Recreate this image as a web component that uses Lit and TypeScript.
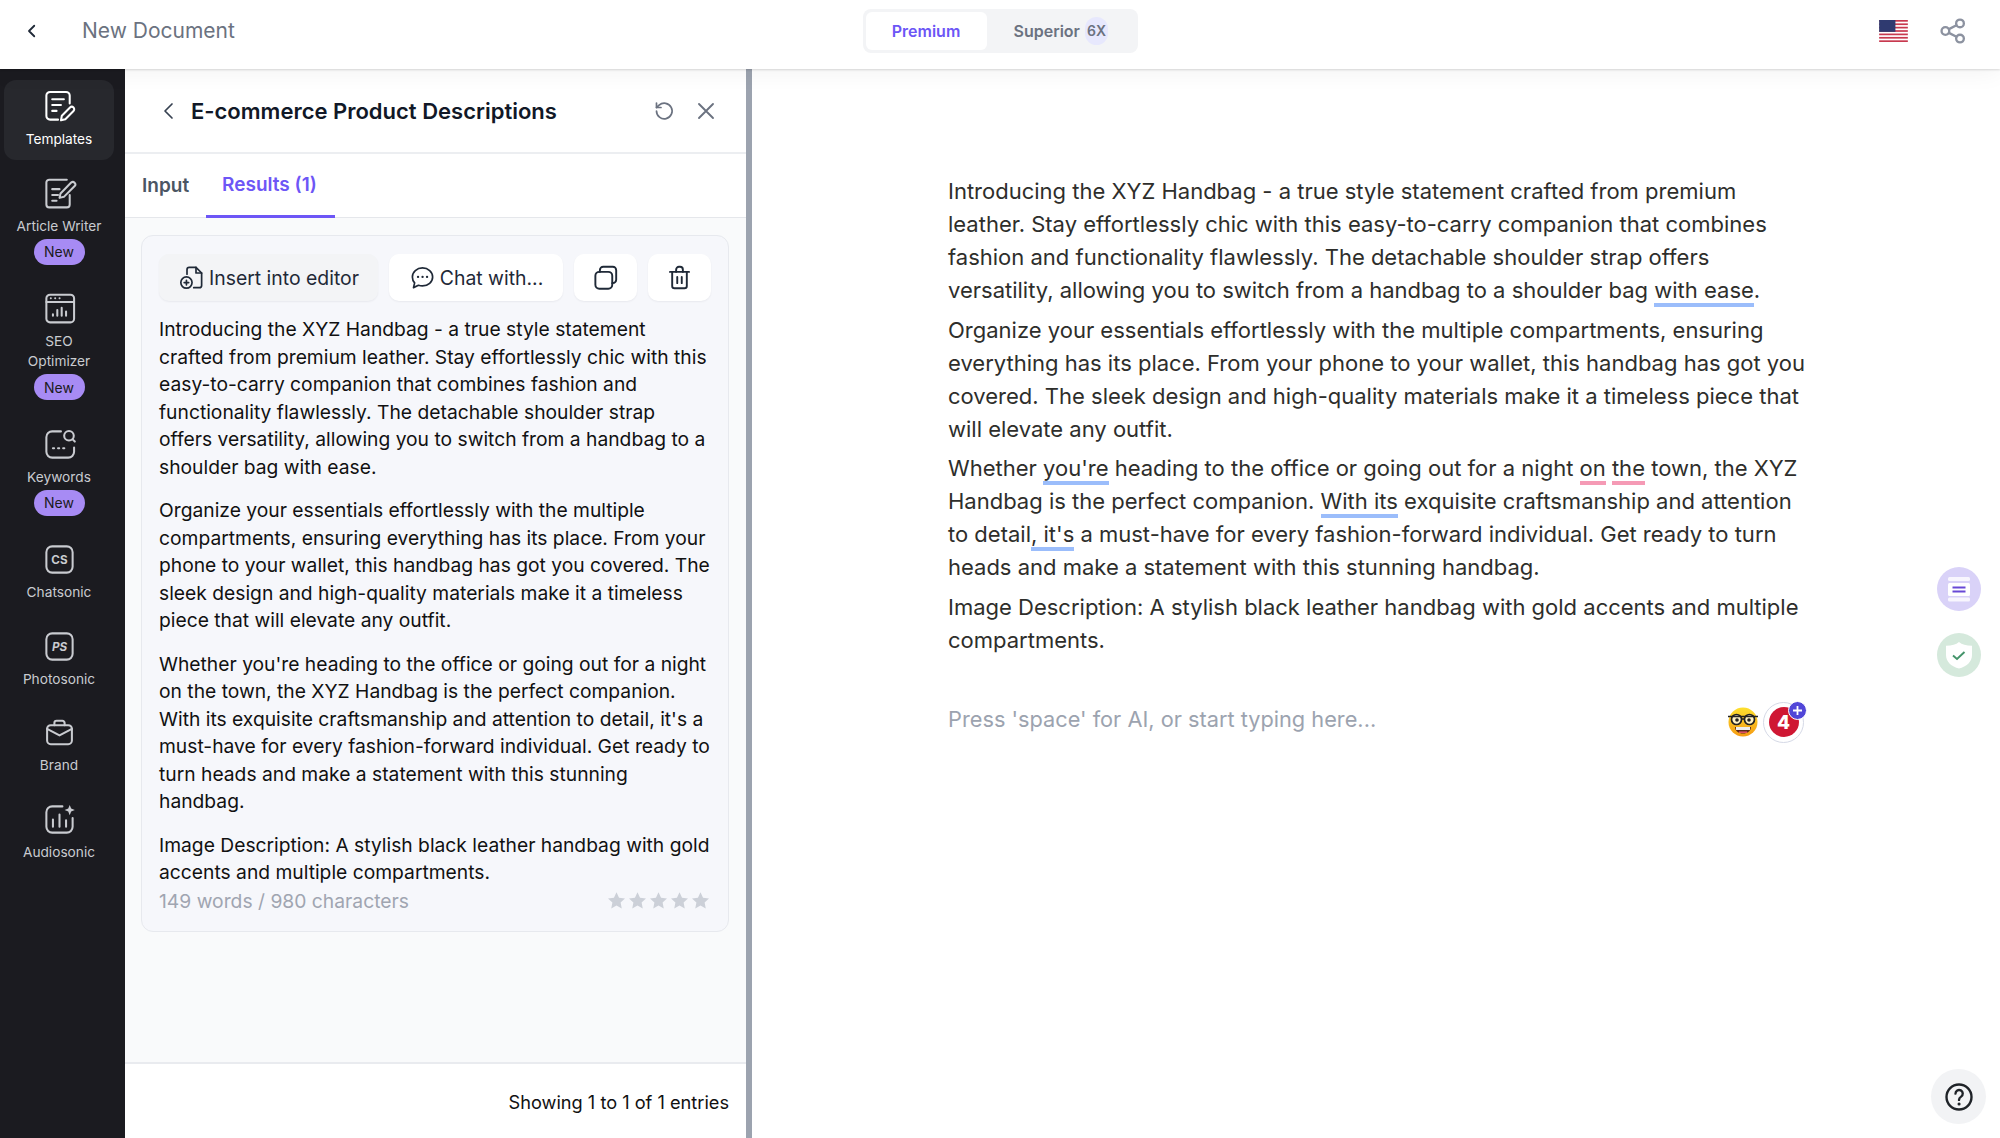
import { LitElement, html, css, svg } from "lit";
import { customElement } from "lit/decorators.js";

const stroke = (w: number, inner: unknown, box = 24) => html`<svg width="100%" height="100%" viewBox="0 0 ${box} ${box}" fill="none" stroke="currentColor" stroke-width="${w}" stroke-linecap="round" stroke-linejoin="round">${inner}</svg>`;

const navIcons: Record<string, unknown> = {
  templates: svg`<path d="M11 21H5.5A2.5 2.5 0 0 1 3 18.5v-14A2.5 2.5 0 0 1 5.5 2h11A2.5 2.5 0 0 1 19 4.5V10"/><path d="M7 7h8M7 11h6M7 15h3"/><path d="M13 21.5l.6-3.2 5.6-5.6a1.6 1.6 0 0 1 2.4 2.4L16 20.7z"/>`,
  article: svg`<path d="M19 13v6.5a2 2 0 0 1-2 2H5a2 2 0 0 1-2-2v-15a2 2 0 0 1 2-2h12"/><path d="M7 9h5M7 13h4M7 17h3"/><path d="M12 15l.7-3L20 4.500a1.700 1.700 0 0 1 2.400 2.400L15 14.300z"/>`,
  seo: svg`<rect x="3" y="2.500" width="19" height="19" rx="2.500"/><path d="M3 7.500h19"/><path d="M6 5h.1M9 5h.1M12 5h.1" stroke-width="1.300"/><path d="M7.500 17v-1M10.500 17v-4M13.500 17v-5.500M16.500 17v-3" />`,
  keywords: svg`<path d="M13 3H7a4 4 0 0 0-4 4v10a4 4 0 0 0 4 4h11a4 4 0 0 0 4-4v-3"/><circle cx="18.500" cy="6" r="3.300"/><path d="M21 8.500l1.500 1.500"/><path d="M7.500 14.500h.8M11 14.500h.8M14.500 14.500h.8"/>`,
  chatsonic: svg`<rect x="3" y="3" width="18" height="18" rx="4"/><text x="12" y="15.200" text-anchor="middle" font-family="Inter" font-weight="700" font-size="8" fill="currentColor" stroke="none">CS</text>`,
  photosonic: svg`<rect x="3" y="3" width="18" height="18" rx="4"/><text x="12" y="15.200" text-anchor="middle" font-family="Inter" font-style="italic" font-weight="700" font-size="8" fill="currentColor" stroke="none">PS</text>`,
  brand: svg`<rect x="3.500" y="7" width="17" height="13" rx="2.500"/><path d="M8.500 7V5.500A1.500 1.500 0 0 1 10 4h4a1.500 1.500 0 0 1 1.500 1.500V7"/><path d="M3.500 9.500L12 14l8.500-4.500"/>`,
  audio: svg`<path d="M14 3H7a4 4 0 0 0-4 4v10a4 4 0 0 0 4 4h10a4 4 0 0 0 4-4v-6"/><path d="M7.500 12v5M12 8.500V17M16.500 12.500V17"/><path d="M19 2l1 2.500L22.500 5.500 20 6.500 19 9l-1-2.500-2.500-1 2.500-1z" fill="currentColor" stroke="none"/>`,
};

const nav = [
  { key: "templates", label: "Templates", active: true },
  { key: "article", label: "Article Writer", badge: true },
  { key: "seo", label: "SEO<br>Optimizer", lines: ["SEO", "Optimizer"], badge: true },
  { key: "keywords", label: "Keywords", badge: true },
  { key: "chatsonic", label: "Chatsonic" },
  { key: "photosonic", label: "Photosonic" },
  { key: "brand", label: "Brand" },
  { key: "audio", label: "Audiosonic" },
];

const stripes = [0, 2, 4, 6, 8, 10, 12];

@customElement("app-root")
export class AppRoot extends LitElement {
  static styles = css`
    :host { display: block; width: 100%; height: 1138px; font-family: Inter, "Liberation Sans", sans-serif; overflow: hidden; background: #fff; }
    .page { display: grid; grid-template-rows: 69px 1fr; height: 1138px; }
    .top { display: grid; grid-template-columns: 1fr auto 1fr; align-items: center; padding-bottom: 8px; box-sizing: border-box; background: #fff; box-shadow: 0 1px 2px rgba(0,0,0,.14), 0 4px 22px rgba(0,0,0,.05); position: relative; z-index: 2; }
    .top-left { display: flex; align-items: center; padding-left: 23px; }
    .top-back { width: 18px; height: 18px; color: #1f2937; margin-right: 41px; }
    .doc { font-size: 21px; color: #6b7280; }
    .toggle { display: flex; align-items: center; height: 44px; width: 275px; box-sizing: border-box; background: #f3f4f6; border-radius: 8px; padding: 3px; font-size: 16px; font-weight: 600; }
    .toggle-on { width: 121px; height: 38px; background: #fff; border-radius: 6px; color: #6c56f6; display: flex; align-items: center; justify-content: center; }
    .toggle-off { display: flex; align-items: center; color: #6b7280; margin-left: 27px; gap: 5px; }
    .x6 { width: 23px; height: 28px; border-radius: 12px; background: #e7e8fd; font-size: 14px; display: flex; align-items: center; justify-content: center; }
    .top-right { display: flex; justify-content: flex-end; align-items: center; gap: 31px; padding-right: 33px; }
    .flag { width: 29px; height: 22px; display: block; }
    .share { width: 28px; height: 28px; color: #8c92a0; }

    .body { display: flex; min-height: 0; }
    .side { width: 125px; flex: none; background: #1b1b20; padding: 11px 0 0 4px; box-sizing: border-box; display: flex; flex-direction: column; gap: 6.500px; }
    .item { width: 110px; min-height: 80px; box-sizing: border-box; border-radius: 12px; padding: 9px 0 10px; display: flex; flex-direction: column; align-items: center; color: #c9cbd0; font-size: 13.700px; }
    .item.on { background: #27282d; color: #fff; }
    .nav-ic { width: 35px; height: 35px; margin-bottom: 5px; }
    .lbl { line-height: 20px; text-align: center; white-space: nowrap; }
    .new { margin-top: 3px; margin-bottom: 1px; width: 51px; height: 26px; border-radius: 13px; background: #a78bf4; color: #1b1b20; font-size: 14px; display: flex; align-items: center; justify-content: center; }

    .panel { width: 621px; flex: none; display: flex; flex-direction: column; background: #fff; }
    .ph { height: 85px; flex: none; display: flex; align-items: center; padding: 0 28px 0 36px; box-sizing: border-box; border-bottom: 2px solid #eceef1; }
    .ph-back { width: 24px; height: 24px; color: #374151; margin-right: 10px; margin-left: -4px; }
    .ph h1 { flex: 1; margin: 0; font-size: 22px; font-weight: 600; color: #111827; }
    .ph-ic { width: 24px; height: 24px; color: #6b7280; margin-left: 18px; }
    .tabs { height: 64px; flex: none; display: flex; box-sizing: border-box; border-bottom: 1px solid #e5e7eb; padding-left: 17px; font-size: 19px; font-weight: 600; color: #4b5563; }
    .tab { display: flex; align-items: center; }
    .tab.a { margin-left: 17px; padding: 0 18px 0 16px; color: #6d56f6; border-bottom: 3px solid #6d56f6; height: 64px; box-sizing: border-box; }
    .scroll { flex: 1; background: #f9fafb; padding: 17px 17px 0 16px; min-height: 0; }
    .card { background: #f6f7fb; border: 1.500px solid #e7e9ee; border-radius: 12px; padding: 18px 17px 0; height: 697px; box-sizing: border-box; }
    .btns { display: flex; gap: 11px; height: 47px; margin-bottom: 15px; }
    .btn { display: flex; align-items: center; justify-content: center; gap: 4px; background: #fff; border-radius: 10px; font-size: 19.400px; color: #1f2937; box-shadow: 0 1px 2px rgba(17,24,39,.06); white-space: nowrap; }
    .btn.grey { background: #f3f4f6; width: 219px; }
    .btn.chat { width: 174px; }
    .btn.sq { width: 63px; }
    .bi { width: 27px; height: 27px; color: #1f2937; flex: none; }
    .res { font-size: 19.250px; line-height: 27.500px; color: #111; }
    .res p { margin: 0 0 16px; white-space: nowrap; }
    .res p.last { margin: 0; }
    .meta { display: flex; justify-content: space-between; align-items: center; height: 28px; color: #a0a5b1; font-size: 19.300px; }
    .stars { display: flex; gap: 0; color: #ccd0d8; }
    .star { width: 21px; height: 21px; }
    .pf { height: 76px; flex: none; border-top: 2px solid #e9ebef; display: flex; align-items: center; justify-content: flex-end; padding: 2px 17px 0 0; box-sizing: border-box; font-size: 18.200px; color: #111; }
    .bar { width: 6px; flex: none; background: #9ca3af; }

    .main { flex: 1; position: relative; padding: 106px 0 0 196px; box-sizing: border-box; background: #fff; }
    .doc-text { font-size: 22px; line-height: 33px; color: #2e2e2b; }
    .doc-text p { margin: 0 0 6.600px; white-space: nowrap; }
    .b { border-bottom: 4px solid #9bbdfb; }
    .r { border-bottom: 4px solid #f59ab5; }
    .ph-row { margin-top: 40px; width: 856px; display: flex; align-items: center; justify-content: space-between; height: 44px; }
    .hint { font-size: 21.750px; color: #9ca3af; }
    .marks { display: flex; align-items: center; gap: 5px; margin-top: 7px; }
    .emoji { width: 30px; height: 30px; display: block; }
    .score { width: 41px; height: 41px; border-radius: 50%; border: 1.500px solid #d5d9e6; box-sizing: border-box; position: relative; display: flex; align-items: center; justify-content: center; }
    .score-in { width: 30px; height: 30px; border-radius: 50%; background: #cf1733; color: #fff; font-weight: 800; font-size: 19px; display: flex; align-items: center; justify-content: center; }
    .plus { position: absolute; right: -4px; top: -2px; width: 17px; height: 17px; border-radius: 50%; background: #5146d8; color: #fff; display: flex; align-items: center; justify-content: center; border: 1.500px solid #fff; box-sizing: content-box; }
    .fab { position: absolute; width: 44px; height: 44px; border-radius: 50%; left: 1185px; display: flex; align-items: center; justify-content: center; }
    .fab.f1 { top: 498px; background: #d9d2f8; }
    .fab.f2 { top: 564px; background: #d5e9dc; }
    .fab svg { width: 30px; height: 30px; display: block; }
    .help { position: absolute; left: 1179px; top: 1000px; width: 55px; height: 55px; border-radius: 50%; background: #f2f3f5; display: flex; align-items: center; justify-content: center; color: #1f2328; }
    .help svg { width: 30px; height: 30px; }
  `;

  render() {
    const star = svg`<path d="M12 2.500l2.900 6.300 6.800.8-5 4.700 1.300 6.800-6-3.400-6 3.400 1.300-6.800-5-4.700 6.800-.8z" fill="currentColor"/>`;
    return html`<div class="page">
      <header class="top">
        <div class="top-left">
          <span class="top-back">${stroke(2.4, svg`<path d="M15 5l-7 7 7 7"/>`)}</span>
          <span class="doc">New Document</span>
        </div>
        <div class="toggle">
          <div class="toggle-on">Premium</div>
          <div class="toggle-off">Superior <span class="x6">6X</span></div>
        </div>
        <div class="top-right">
          <svg class="flag" viewBox="0 0 30 23">
            <rect width="30" height="23" fill="#fff"/>
            ${stripes.map((i) => svg`<rect y="${i * 1.77}" width="30" height="1.770" fill="#c8394f"/>`)}
            <rect width="17" height="12.400" fill="#2f3a70"/>
          </svg>
          <span class="share">${stroke(2, svg`<circle cx="18" cy="5.500" r="3.300"/><circle cx="5.500" cy="12" r="3.300"/><circle cx="18" cy="18.500" r="3.300"/><path d="M8.500 10.400l6.500-3.400M8.500 13.600l6.500 3.400"/>`)}</span>
        </div>
      </header>
      <div class="body">
        <nav class="side">
          ${nav.map((n) => html`<div class="item ${n.active ? "on" : ""}">
            <span class="nav-ic">${stroke(1.4, navIcons[n.key])}</span>
            ${(n.lines ?? [n.label]).map((l) => html`<span class="lbl">${l}</span>`)}
            ${n.badge ? html`<span class="new">New</span>` : ""}
          </div>`)}
        </nav>
        <section class="panel">
          <div class="ph">
            <span class="ph-back">${stroke(1.700, svg`<path d="M15 5l-7 7 7 7"/>`)}</span>
            <h1>E-commerce Product Descriptions</h1>
            <span class="ph-ic">${stroke(1.7, svg`<path d="M4.500 12a7.800 7.800 0 1 0 2.600-5.800L4.500 8.500"/><path d="M4.500 4v4.500H9" />`)}</span>
            <span class="ph-ic">${stroke(1.900, svg`<path d="M5 5l14 14M19 5L5 19"/>`)}</span>
          </div>
          <div class="tabs"><div class="tab">Input</div><div class="tab a">Results (1)</div></div>
          <div class="scroll">
            <div class="card">
              <div class="btns">
                <div class="btn grey"><span class="bi">${stroke(1.500, svg`<path d="M8 9V5a2 2 0 0 1 2-2h6l5 5v11a2 2 0 0 1-2 2h-5"/><path d="M16 3v5h5"/><circle cx="7.500" cy="16.500" r="5"/><path d="M5.500 16.500h4M7.500 14.500v4"/>`)}</span>Insert into editor</div>
                <div class="btn chat"><span class="bi">${stroke(1.500, svg`<path d="M12 3.500c5 0 9 3.500 9 8s-4 8-9 8c-1.300 0-2.500-.2-3.600-.6L4 21l1-4.200c-1.300-1.400-2-3.200-2-5.300 0-4.500 4-8 9-8z"/><path d="M8 11.500h.1M12 11.500h.1M16 11.500h.1" stroke-width="2"/>`)}</span>Chat with...</div>
                <div class="btn sq"><span class="bi">${stroke(1.700, svg`<rect x="3" y="7" width="15" height="15" rx="3.500"/><path d="M7 7V5.500A3 3 0 0 1 10 2.500h8.500a3 3 0 0 1 3 3V14a3 3 0 0 1-3 3H18"/>`)}</span></div>
                <div class="btn sq"><span class="bi">${stroke(1.700, svg`<path d="M3.500 7h17"/><path d="M9 7V5a2.500 2.500 0 0 1 2.500-2.500h1A2.500 2.500 0 0 1 15 5v2"/><path d="M5.500 7v12.500a2 2 0 0 0 2 2h9a2 2 0 0 0 2-2V7"/><path d="M10 11.500v5.500M14 11.500v5.500"/>`)}</span></div>
              </div>
              <div class="res">
                <p>Introducing the XYZ Handbag - a true style statement<br>crafted from premium leather. Stay effortlessly chic with this<br>easy-to-carry companion that combines fashion and<br>functionality flawlessly. The detachable shoulder strap<br>offers versatility, allowing you to switch from a handbag to a<br>shoulder bag with ease.</p>
                <p>Organize your essentials effortlessly with the multiple<br>compartments, ensuring everything has its place. From your<br>phone to your wallet, this handbag has got you covered. The<br>sleek design and high-quality materials make it a timeless<br>piece that will elevate any outfit.</p>
                <p>Whether you're heading to the office or going out for a night<br>on the town, the XYZ Handbag is the perfect companion.<br>With its exquisite craftsmanship and attention to detail, it's a<br>must-have for every fashion-forward individual. Get ready to<br>turn heads and make a statement with this stunning<br>handbag.</p>
                <p class="last">Image Description: A stylish black leather handbag with gold<br>accents and multiple compartments.</p>
              </div>
              <div class="meta"><span>149 words / 980 characters</span>
                <span class="stars">${[0, 1, 2, 3, 4].map(() => html`<span class="star"><svg width="100%" height="100%" viewBox="0 0 24 24">${star}</svg></span>`)}</span>
              </div>
            </div>
          </div>
          <div class="pf">Showing 1 to 1 of 1 entries</div>
        </section>
        <div class="bar"></div>
        <main class="main">
          <div class="doc-text">
            <p>Introducing the XYZ Handbag - a true style statement crafted from premium<br>leather. Stay effortlessly chic with this easy-to-carry companion that combines<br>fashion and functionality flawlessly. The detachable shoulder strap offers<br>versatility, allowing you to switch from a handbag to a shoulder bag <span class="b">with ease</span>.</p>
            <p>Organize your essentials effortlessly with the multiple compartments, ensuring<br>everything has its place. From your phone to your wallet, this handbag has got you<br>covered. The sleek design and high-quality materials make it a timeless piece that<br>will elevate any outfit.</p>
            <p>Whether <span class="b">you're</span> heading to the office or going out for a night <span class="r">on</span> <span class="r">the</span> town, the XYZ<br>Handbag is the perfect companion. <span class="b">With its</span> exquisite craftsmanship and attention<br>to detail<span class="b">, it's</span> a must-have for every fashion-forward individual. Get ready to turn<br>heads and make a statement with this stunning handbag.</p>
            <p>Image Description: A stylish black leather handbag with gold accents and multiple<br>compartments.</p>
          </div>
          <div class="ph-row">
            <span class="hint">Press 'space' for AI, or start typing here...</span>
            <div class="marks">
              <svg class="emoji" viewBox="0 0 30 30">
                <defs><linearGradient id="eg" x1="0" y1="0" x2="0" y2="1"><stop offset="0" stop-color="#fde02f"/><stop offset="1" stop-color="#f59b12"/></linearGradient></defs>
                <circle cx="15" cy="15" r="14.500" fill="url(#eg)"/>
                <circle cx="8.500" cy="12.500" r="5" fill="#fff3c4" stroke="#222" stroke-width="1.700"/>
                <circle cx="21.500" cy="12.500" r="5" fill="#fff3c4" stroke="#222" stroke-width="1.700"/>
                <path d="M0 9.500h30M13 12h4" stroke="#222" stroke-width="1.700"/>
                <circle cx="9" cy="13" r="1.800" fill="#222"/><circle cx="21" cy="13" r="1.800" fill="#222"/>
                <path d="M7 20h16c0 4-3.500 6.500-8 6.500S7 24 7 20z" fill="#5a2a1a"/>
                <rect x="8" y="20" width="14" height="3" fill="#eee"/>
                <path d="M11 25.200h8" stroke="#e8546a" stroke-width="1.500"/>
              </svg>
              <div class="score"><div class="score-in">4</div>
                <span class="plus"><svg width="11" height="11" viewBox="0 0 11 11"><path d="M5.500 1v9M1 5.500h9" stroke="#fff" stroke-width="1.800"/></svg></span>
              </div>
            </div>
          </div>
          <div class="fab f1"><svg viewBox="0 0 30 30"><rect x="4" y="3" width="22" height="4" rx="1.500" fill="#fff" opacity=".8"/><rect x="4" y="9" width="22" height="13" rx="1.500" fill="#fff"/><rect x="4" y="23.500" width="22" height="4" rx="1.500" fill="#fff" opacity=".8"/><path d="M8.500 13.500h13M8.500 17.500h13" stroke="#6849d6" stroke-width="1.800"/></svg></div>
          <div class="fab f2"><svg viewBox="0 0 30 30"><path d="M15 2c3 2.500 7 3.700 13 3.700V15c0 7-5.500 11.500-13 13.500C7.500 26.500 2 22 2 15V5.700C8 5.700 12 4.500 15 2z" fill="#fff"/><path d="M9 15.500l4 3.500 7.500-7" fill="none" stroke="#44946a" stroke-width="1.900"/></svg></div>
          <div class="help">${stroke(1.900, svg`<circle cx="12" cy="12" r="10"/><path d="M9.200 9.300a2.900 2.900 0 1 1 4.500 2.400c-1.100.7-1.700 1.300-1.700 2.600"/><path d="M12 17.500h.1" stroke-width="2.400"/>`)}</div>
        </main>
      </div>
    </div>`;
  }
}
